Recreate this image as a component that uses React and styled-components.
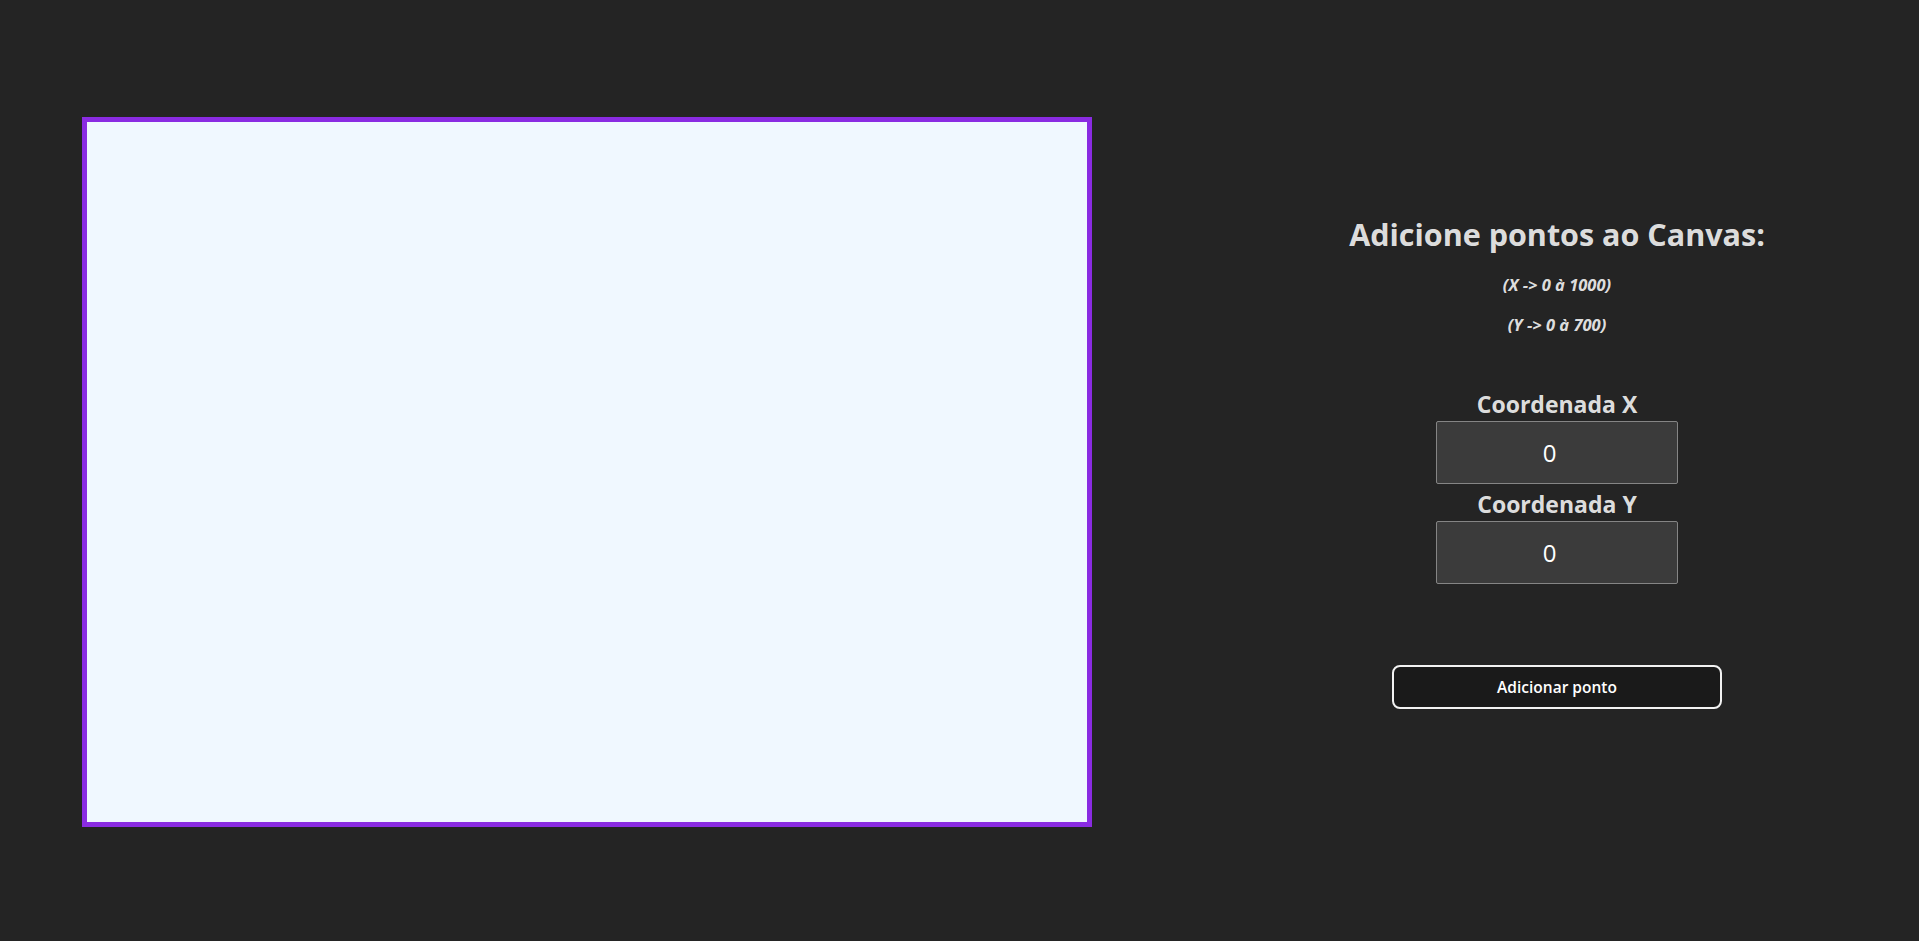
import React, { useState } from 'react';
import styled, { createGlobalStyle } from 'styled-components';

const GlobalStyle = createGlobalStyle`
    body {
        margin: 0;
        background: #242424;
        color: rgba(255, 255, 255, 0.87);
        font-family: "Open Sans", "Noto Sans", sans-serif;
    }
`;

const App = () => {
    const [x, setX] = useState(0);
    const [y, setY] = useState(0);

    return (
        <>
            <GlobalStyle />
            <Page>
                <Canvas width={1000} height={700} />
                <Panel>
                    <Title>Adicione pontos ao Canvas:</Title>
                    <Hint $gap={23}>(X -&gt; 0 à 1000)</Hint>
                    <Hint $gap={20}>(Y -&gt; 0 à 700)</Hint>
                    <Label $top={55}>Coordenada X</Label>
                    <Input type="number" value={x} onChange={(e) => setX(e.target.value)} />
                    <Label $top={6}>Coordenada Y</Label>
                    <Input type="number" value={y} onChange={(e) => setY(e.target.value)} />
                    <Button>Adicionar ponto</Button>
                </Panel>
            </Page>
        </>
    );
};

const Page = styled.div`
    display: flex;
    align-items: flex-start;
    min-height: 100vh;
    box-sizing: border-box;
    padding: 117px 0 0 82px;
`;

const Canvas = styled.canvas`
    display: block;
    flex-shrink: 0;
    border: 5px solid #8a2be2;
    background: #f0f8ff;
`;

const Panel = styled.div`
    width: 600px;
    margin: 99px 0 0 165px;
    display: flex;
    flex-direction: column;
    align-items: center;
`;

const Title = styled.h1`
    margin: 0;
    font-size: 30.5px;
    line-height: 36px;
    font-weight: 700;
`;

const Hint = styled.h4`
    margin: ${(p) => p.$gap}px 0 0;
    font-size: 16.5px;
    line-height: 20px;
    font-style: italic;
    font-weight: 700;
`;

const Label = styled.label`
    margin: ${(p) => p.$top}px 0 3px;
    font-size: 23px;
    line-height: 28px;
    font-weight: 700;
`;

const Input = styled.input`
    width: 242px;
    height: 63px;
    box-sizing: border-box;
    padding: 1px 2px;
    background: #3b3b3b;
    border: 1px solid #858585;
    border-radius: 2px;
    color: #fff;
    font-family: inherit;
    font-size: 24px;
    text-align: center;
    outline: none;
`;

const Button = styled.button`
    margin-top: 81px;
    width: 330px;
    height: 44px;
    box-sizing: border-box;
    background: #1a1a1a;
    border: 2px solid #f2f2f2;
    border-radius: 8px;
    color: #fff;
    font-family: inherit;
    font-size: 15.5px;
    font-weight: 600;
    cursor: pointer;
`;

export default App;
